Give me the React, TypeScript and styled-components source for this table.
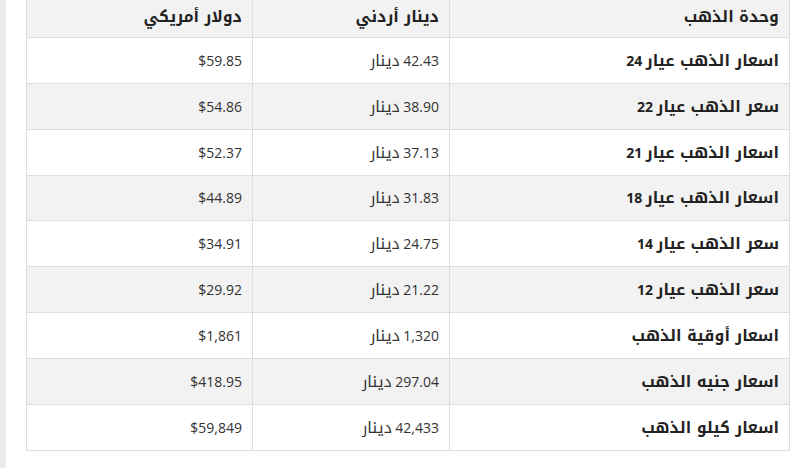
import React from "react";
import styled, { createGlobalStyle } from "styled-components";

const Global = createGlobalStyle`
  html, body { margin: 0; padding: 0; background: #ffffff; }
  body { font-family: "Open Sans", "DejaVu Sans", sans-serif; overflow: hidden; }
`;

const Page = styled.div`
  display: flex;
  height: 468px;
  background: #ffffff;
`;

const Strip = styled.div`
  width: 6px;
  flex: none;
  background: #ebe9ea;
`;

const Content = styled.div`
  flex: 1;
  padding: 0 9px 0 20px;
  overflow: hidden;
`;

const Table = styled.table`
  direction: rtl;
  width: 763px;
  margin-top: -5px;
  border-collapse: collapse;
  font-size: 14px;
  line-height: 20px;
  color: #333;
  table-layout: fixed;
`;

const HeadCell = styled.th`
  height: 41px;
  padding: 0 10px;
  background: #f2f2f2;
  border: 1px solid #dddddd;
  text-align: right;
  font-weight: 700;
  color: #222;
`;

const Row = styled.tr<{ $alt: boolean }>`
  height: 45.85px;
  background: ${(p) => (p.$alt ? "#f2f2f2" : "#ffffff")};
`;

const Cell = styled.td<{ $bold?: boolean }>`
  padding: 1px 10px 0;
  border: 1px solid #dddddd;
  text-align: right;
  font-weight: ${(p) => (p.$bold ? 700 : 400)};
  color: ${(p) => (p.$bold ? "#222" : "#333")};
  white-space: nowrap;
`;

const Ar = styled.span`
  font-family: "Noto Kufi Arabic", "Noto Sans Arabic", "DejaVu Sans", sans-serif;
  font-size: 15.8px;
`;

const LtrCell = styled(Cell)`
  direction: ltr;
  text-align: right;
`;

function mixed(text: string) {
  const parts = text.split(/([\u0600-\u06FF]+(?:\s+[\u0600-\u06FF]+)*)/);
  return parts.map((p, i) =>
    /[\u0600-\u06FF]/.test(p) ? <Ar key={i}>{p}</Ar> : <React.Fragment key={i}>{p}</React.Fragment>
  );
}

const rows: [string, string, string][] = [
  ["اسعار الذهب عيار 24", "42.43 دينار", "$59.85"],
  ["سعر الذهب عيار 22", "38.90 دينار", "$54.86"],
  ["اسعار الذهب عيار 21", "37.13 دينار", "$52.37"],
  ["اسعار الذهب عيار 18", "31.83 دينار", "$44.89"],
  ["سعر الذهب عيار 14", "24.75 دينار", "$34.91"],
  ["سعر الذهب عيار 12", "21.22 دينار", "$29.92"],
  ["اسعار أوقية الذهب", "1,320 دينار", "$1,861"],
  ["اسعار جنيه الذهب", "297.04 دينار", "$418.95"],
  ["اسعار كيلو الذهب", "42,433 دينار", "$59,849"],
];

export default function App() {
  return (
    <>
      <Global />
      <Page>
        <Strip />
        <Content>
          <Table>
            <colgroup>
              <col style={{ width: 340 }} />
              <col style={{ width: 197 }} />
              <col style={{ width: 226 }} />
            </colgroup>
            <thead>
              <tr>
                <HeadCell>{mixed("وحدة الذهب")}</HeadCell>
                <HeadCell>{mixed("دينار أردني")}</HeadCell>
                <HeadCell>{mixed("دولار أمريكي")}</HeadCell>
              </tr>
            </thead>
            <tbody>
              {rows.map((r, i) => (
                <Row key={i} $alt={i % 2 === 1}>
                  <Cell $bold>{mixed(r[0])}</Cell>
                  <Cell>{mixed(r[1])}</Cell>
                  <LtrCell>{r[2]}</LtrCell>
                </Row>
              ))}
            </tbody>
          </Table>
        </Content>
      </Page>
    </>
  );
}
